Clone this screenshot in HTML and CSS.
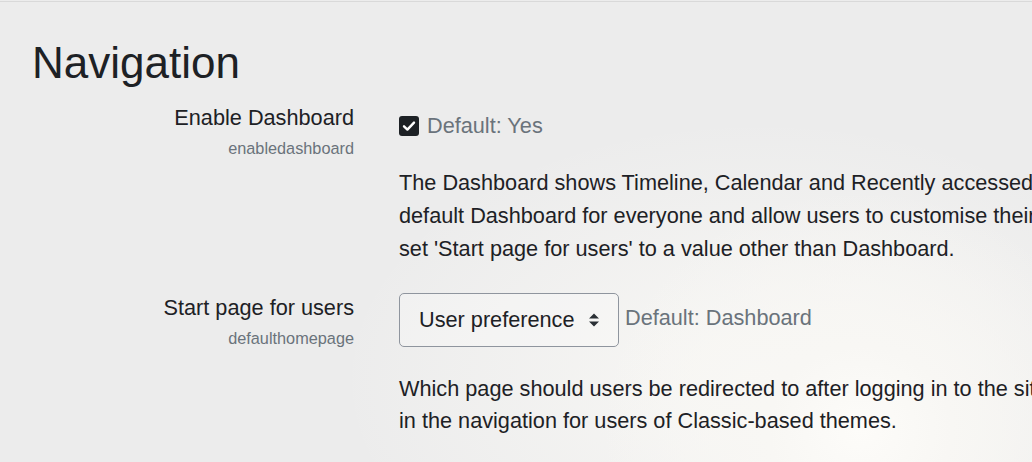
FILE: index.html
```html
<!DOCTYPE html>
<html lang="en">
<head>
<meta charset="utf-8">
<title>Navigation</title>
<link rel="stylesheet" href="styles.css">
</head>
<body>
<div class="page">
  <h2 class="title">Navigation</h2>

  <div class="setting setting-first">
    <div class="label-col">
      <div class="label">Enable Dashboard</div>
      <div class="name">enabledashboard</div>
    </div>
    <div class="content-col content-check">
      <div class="check-row">
        <span class="checkbox">
          <svg width="20" height="20" viewBox="0 0 20 20"><path d="M5 10.3 L8.4 13.6 L15 6.6" fill="none" stroke="#fff" stroke-width="2.4" stroke-linecap="round" stroke-linejoin="round"/></svg>
        </span>
        <span class="default">Default: Yes</span>
      </div>
      <p class="desc desc-first">The Dashboard shows Timeline, Calendar and Recently accessed items blocks by default. You can set a<br>default Dashboard for everyone and allow users to customise their own Dashboard. If disabled, you should<br>set 'Start page for users' to a value other than Dashboard.</p>
    </div>
  </div>

  <div class="setting setting-second">
    <div class="label-col">
      <div class="label">Start page for users</div>
      <div class="name">defaulthomepage</div>
    </div>
    <div class="content-col">
      <div class="select-row">
        <div class="select">
          <span>User preference</span>
          <svg class="arrows" width="12" height="16" viewBox="0 0 12 16"><path d="M6 1.5 L11 6.5 H1 Z M6 14.5 L11 9.5 H1 Z" fill="#2b3035"/></svg>
        </div>
        <span class="default default-select">Default: Dashboard</span>
      </div>
      <p class="desc desc-second">Which page should users be redirected to after logging in to the site? The setting also determines the first link<br>in the navigation for users of Classic-based themes.</p>
    </div>
  </div>
</div>
</body>
</html>
```

FILE: styles.css
```css
html, body {
  margin: 0;
  padding: 0;
  height: 100%;
}

body {
  overflow: hidden;
  font-family: "Liberation Sans", Arial, sans-serif;
  color: #1d2125;
  background-color: #ececec;
  background-image:
    radial-gradient(ellipse 260px 240px at 860px 430px, #fdfcf9 0%, #f8f7f4 35%, rgba(236,236,236,0) 100%),
    radial-gradient(ellipse 420px 260px at 760px 380px, rgba(250,249,246,0.9) 0%, rgba(236,236,236,0) 100%);
}

.page {
  margin-top: 1px;
  border-top: 1px solid #d9d9d9;
  padding: 34px 0 0 32px;
  width: 1400px;
}

.title {
  margin: 0;
  font-size: 44px;
  font-weight: 400;
  line-height: 53px;
  color: #1d2125;
}

.setting {
  display: grid;
  grid-template-columns: 322px 1000px;
  column-gap: 45px;
}

.setting-first {
  margin-top: 14px;
}

.setting-second {
  margin-top: 28px;
}

.label-col {
  text-align: right;
}

.label {
  font-size: 21.7px;
  line-height: 30px;
}

.name {
  margin-top: 3px;
  font-size: 16.3px;
  line-height: 24px;
  color: #6a737b;
}

.content-check {
  padding-top: 8px;
}

.check-row {
  display: flex;
  align-items: center;
  gap: 8px;
  height: 30px;
}

.checkbox {
  display: flex;
  width: 20px;
  height: 20px;
  border-radius: 3px;
  background: #1d2125;
}

.default {
  font-size: 21.7px;
  line-height: 30px;
  color: #6a737b;
}

.desc {
  margin: 0;
  font-size: 21.7px;
  white-space: nowrap;
  color: #1d2125;
}

.desc-first {
  margin-top: 25px;
  line-height: 33px;
}

.desc-second {
  margin-top: 26px;
  line-height: 32px;
}

.select-row {
  display: flex;
  align-items: center;
  gap: 6px;
}

.select {
  box-sizing: border-box;
  display: flex;
  align-items: center;
  justify-content: space-between;
  width: 220px;
  height: 54px;
  padding: 0 18px 0 19px;
  border: 1px solid #8f959e;
  border-radius: 5px;
  background: rgba(255,255,255,0.25);
  font-size: 21.7px;
  color: #1d2125;
}

.default-select {
  position: relative;
  top: -2px;
}
```
